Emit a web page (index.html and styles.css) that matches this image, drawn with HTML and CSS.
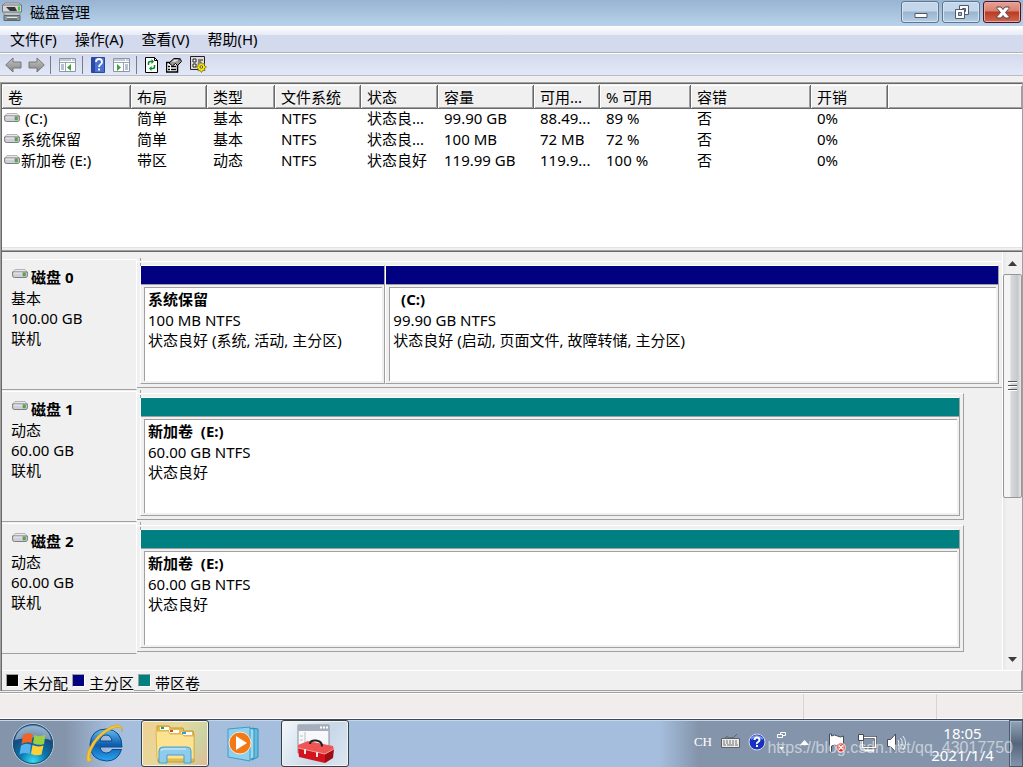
FILE: index.html
```html
<!DOCTYPE html>
<html lang="zh-CN">
<head>
<meta charset="utf-8">
<title>磁盘管理</title>
<link rel="stylesheet" href="styles.css">
</head>
<body>
<svg class="defs" aria-hidden="true">
  <defs>
    <linearGradient id="arrow" x1="0" y1="0" x2="0" y2="1"><stop offset="0" stop-color="#c4c4c4"/><stop offset="1" stop-color="#858585"/></linearGradient>
    <symbol id="drive" viewBox="0 0 16 9">
      <path d="M3 .5h10l2.3 2.700H.7z" fill="#e9e9ec" stroke="#a5a5a8" stroke-width=".8"/>
      <path d="M.6 3h14.800v4q-.5 1.500-1.400 1.500H2.200Q.6 8 .6 7z" fill="#cfcfd6" stroke="#737379" stroke-width=".9"/>
      <path d="M1.500 4h9" stroke="#f2f2f6"/>
      <path d="M11 4h2.500v3H11z" fill="#35c51b" stroke="#66806a" stroke-width=".5"/>
    </symbol>
  </defs>
</svg>
<div class="window">
  <header class="titlebar">
    <svg class="app-icon" width="20" height="22" viewBox="0 0 20 22">
      <path d="M3 2h14l3 3H0z" fill="#dedede" stroke="#858585"/>
      <path d="M.500 4h19v7H.500z" fill="#d5d5d6" stroke="#727678"/><path d="M4 6h9l2 4H8z" fill="#303638"/><path d="M16 5.500h2v4h-2z" fill="#2dcd34"/>
      <path d="M2 12h16v2H2z" fill="#f3f3f3" stroke="#8c9295"/><path d="M2 14.500h16v5H2z" fill="#8f989c" stroke="#5d666a"/><path d="M5 16.500h10" stroke="#e2e6e8"/><path d="M5 18h10" stroke="#4d575b"/>
    </svg>
    <h1>磁盘管理</h1>
    <div class="caption-buttons">
      <button class="caption" aria-label="最小化"><svg width="37" height="21" viewBox="0 0 37 21"><path d="M13 11.500h12v4H13z" fill="#fff" stroke="#50586a"/></svg></button>
      <button class="caption" aria-label="还原"><svg width="37" height="21" viewBox="0 0 37 21"><path d="M16.500 3.500h9v9h-9z" fill="#f7f9fb" stroke="#50586a"/><path d="M19.500 6.500h3v3h-3z" fill="#9fb8d1" stroke="#50586a"/><path d="M12.500 7.500h9v9h-9z" fill="#fff" stroke="#50586a"/><path d="M15.500 10.500h3v3h-3z" fill="#9fb8d1" stroke="#50586a"/></svg></button>
      <button class="caption close" aria-label="关闭"><svg width="37" height="21" viewBox="0 0 37 21"><path d="M13 5h4l2 2.500L21 5h4v1.500L21.500 10.500l3.500 4V16h-4l-2-2.500L17 16h-4v-1.500l3.500-4L13 6.500z" fill="#fff" stroke="#54454d"/></svg></button>
    </div>
  </header>
  <nav class="menubar">
    <button>文件(F)</button><button>操作(A)</button><button>查看(V)</button><button>帮助(H)</button>
  </nav>
  <div class="toolbar">
    <button aria-label="后退"><svg width="17" height="16" viewBox="0 0 17 16"><path d="M.700 8 8 1v4h8v6H8v4z" fill="url(#arrow)" stroke="#777"/></svg></button>
    <button class="forward" aria-label="前进"><svg width="17" height="16" viewBox="0 0 17 16"><path d="M16.300 8 9 1v4H1v6h8v4z" fill="url(#arrow)" stroke="#777"/></svg></button>
    <span class="sep"></span>
    <button aria-label="显示/隐藏控制台树"><svg width="17" height="16" viewBox="0 0 17 16"><path d="M.500 1.500h16v13H.500z" fill="#fff" stroke="#8c96a4"/><path d="M1 3h11" stroke="#8c96a4"/><path d="M13 3h3M1 5.500h15M6.500 6v8" stroke="#9ba5b2"/><path d="M2 8h3M2 10h3M2 12h3" stroke="#6f83a0"/><path d="M12 7v7l-4-3.500z" fill="#3aa535"/></svg></button>
    <span class="sep"></span>
    <button aria-label="帮助"><svg width="14" height="16" viewBox="0 0 14 16"><path d="M.500.500h13v15H.500z" fill="#4a70d0" stroke="#2a479f"/><path d="M1 1h3v14H1z" fill="#2b4aa6"/><path d="M5 5q0-3 3-3t3 3q0 1.500-1.500 2.500T8 10" fill="none" stroke="#fff" stroke-width="1.800"/><path d="M7 11.500h2v2H7z" fill="#fff"/></svg></button>
    <button class="next" aria-label="显示/隐藏操作窗格"><svg width="17" height="16" viewBox="0 0 17 16"><path d="M.500 1.500h16v13H.500z" fill="#fff" stroke="#8c96a4"/><path d="M1 3h11" stroke="#8c96a4"/><path d="M13 3h3M1 5.500h15M10.500 6v8" stroke="#9ba5b2"/><path d="M12 8h3M12 10h3M12 12h3" stroke="#6f83a0"/><path d="M4 7v7l4-3.500z" fill="#3aa535"/></svg></button>
    <span class="sep"></span>
    <button class="refresh" aria-label="刷新"><svg width="13" height="16" viewBox="0 0 13 16"><path d="M.500.500h9l3 3v12H.500z" fill="#fff" stroke="#000"/><path d="M9.500.500v3h3" fill="none" stroke="#000"/><path d="M3.500 8V6q0-1.500 2-1.500h2M9.500 8v2q0 1.500-2 1.500h-2" fill="none" stroke="#0b8a2a" stroke-width="1.500"/><path d="M6.500 2v5L9 4.500zM6.500 9v5L4 11.500z" fill="#0b8a2a"/></svg></button>
    <button class="next" aria-label="属性"><svg width="16" height="16" viewBox="0 0 16 16"><path d="M.500 5.500h11v9.500H.500z" fill="#fff" stroke="#000" stroke-width="1.500"/><path d="M2 9.500h2M5 9.500h5M2 12.500h2M5 12.500h5" stroke="#000" stroke-width="1.500"/><path d="M3 6 8 1.500h6l1.500 3-4 4-2-2-3 2.500z" fill="#999" stroke="#000"/><path d="m6 5 2-2h5l-4 2z" fill="#ddd"/><path d="M12.500 1v3l3-2" fill="#444"/></svg></button>
    <button aria-label="设置"><svg width="17" height="17" viewBox="0 0 17 17"><path d="M.500.500h14v13H.500z" fill="#dcdcdc" stroke="#222"/><path d="M3 3h3v3H3zM3 8h3v3H3z" fill="#fff" stroke="#222"/><path d="M8 4h5M8 6h3" stroke="#222"/><path d="m11 6 1.200 2 2.300-.5v2.300l2 1.200-2 1.500.5 2.200-2.300-.2-1.200 2-1.300-2-2.300.3.300-2.300-2-1.500 2-1.200L8 7.500l2 .500z" fill="#f5e414" stroke="#6c6000" stroke-width=".7"/><circle cx="11.300" cy="11" r="1.300" fill="#fff" stroke="#5e5400"/></svg></button>
  </div>
  <main class="console">
    <section class="volume-list">
      <table>
        <colgroup><col class="c-name"><col class="c-layout"><col class="c-type"><col class="c-fs"><col class="c-state"><col class="c-size"><col class="c-free"><col class="c-pct"><col class="c-fault"><col class="c-state"><col></colgroup>
        <thead><tr><th>卷</th><th>布局</th><th>类型</th><th>文件系统</th><th>状态</th><th>容量</th><th>可用...</th><th>% 可用</th><th>容错</th><th>开销</th><th></th></tr></thead>
        <tbody>
          <tr><td class="name"><svg class="drive"><use href="#drive"/></svg> (C:)</td><td>简单</td><td>基本</td><td>NTFS</td><td>状态良...</td><td>99.90 GB</td><td>88.49...</td><td>89 %</td><td>否</td><td>0%</td><td></td></tr>
          <tr><td class="name"><svg class="drive"><use href="#drive"/></svg>系统保留</td><td>简单</td><td>基本</td><td>NTFS</td><td>状态良...</td><td>100 MB</td><td>72 MB</td><td>72 %</td><td>否</td><td>0%</td><td></td></tr>
          <tr><td class="name"><svg class="drive"><use href="#drive"/></svg>新加卷 (E:)</td><td>带区</td><td>动态</td><td>NTFS</td><td>状态良好</td><td>119.99 GB</td><td>119.9...</td><td>100 %</td><td>否</td><td>0%</td><td></td></tr>
        </tbody>
      </table>
    </section>
    <div class="splitter"></div>
    <section class="graph">
      <div class="disks">
        <article class="disk">
          <div class="disk-info"><h2><svg class="drive"><use href="#drive"/></svg>磁盘 0</h2><p>基本</p><p>100.00 GB</p><p>联机</p></div>
          <div class="lane full">
            <div class="volume primary" style="flex-grow:243"><div class="bar"></div><div class="detail"><h3>系统保留</h3><p>100 MB NTFS</p><p>状态良好 (系统, 活动, 主分区)</p></div></div>
            <div class="volume primary" style="flex-grow:614"><div class="bar"></div><div class="detail"><h3>  (C:)</h3><p>99.90 GB NTFS</p><p>状态良好 (启动, 页面文件, 故障转储, 主分区)</p></div></div>
          </div>
        </article>
        <article class="disk">
          <div class="disk-info"><h2><svg class="drive"><use href="#drive"/></svg>磁盘 1</h2><p>动态</p><p>60.00 GB</p><p>联机</p></div>
          <div class="lane" style="width:95.6%">
            <div class="volume striped"><div class="bar"></div><div class="detail"><h3>新加卷  (E:)</h3><p>60.00 GB NTFS</p><p>状态良好</p></div></div>
          </div>
        </article>
        <article class="disk">
          <div class="disk-info"><h2><svg class="drive"><use href="#drive"/></svg>磁盘 2</h2><p>动态</p><p>60.00 GB</p><p>联机</p></div>
          <div class="lane" style="width:95.6%">
            <div class="volume striped"><div class="bar"></div><div class="detail"><h3>新加卷  (E:)</h3><p>60.00 GB NTFS</p><p>状态良好</p></div></div>
          </div>
        </article>
      </div>
      <div class="scrollbar">
        <button aria-label="向上滚动"><svg width="9" height="5" viewBox="0 0 9 5"><path d="M0 5 4.500 0 9 5z" fill="#3c3c3c"/></svg></button>
        <div class="track"><div class="thumb"><i></i><i></i><i></i></div></div>
        <button aria-label="向下滚动"><svg width="9" height="5" viewBox="0 0 9 5"><path d="M0 0h9L4.500 5z" fill="#3c3c3c"/></svg></button>
      </div>
    </section>
    <div class="legend">
      <i class="swatch"></i><span>未分配</span><i class="swatch navy"></i><span>主分区</span><i class="swatch teal"></i><span>带区卷</span>
    </div>
  </main>
  <div class="statusbar"><span></span><span></span><span></span></div>
</div>
<footer class="taskbar">
  <button class="start" aria-label="开始">
    <svg width="44" height="44" viewBox="0 0 44 44">
      <defs><radialGradient id="orb" cx=".5" cy=".92" r=".85"><stop offset="0" stop-color="#38dcf5"/><stop offset=".38" stop-color="#0a76ae"/><stop offset=".75" stop-color="#164b7c"/><stop offset="1" stop-color="#5c86ad"/></radialGradient></defs>
      <circle cx="22" cy="22" r="20.500" fill="url(#orb)" stroke="#b5cbdc"/><circle cx="22" cy="22" r="19.500" fill="none" stroke="#204b71"/>
      <path d="M4 18Q7 4 22 4t18 14q-18-5-36 0z" fill="#d4e2ef" opacity=".5"/>
      <path d="M12 13q5-3 10-.5L20.500 21q-5-2-10 1z" fill="#f26425"/><path d="M23.500 13q5 2.500 11-.5L33 22q-5 2-11-.7z" fill="#9bd045"/><path d="M10 23.500q5-3 10-.5l-1.500 9q-5-2-10 .5z" fill="#55b4ee"/><path d="M21.500 23q5 2.500 11 .5l-2 9q-5 2-10.500-.8z" fill="#ffcf37"/>
    </svg>
  </button>
  <button class="ie" aria-label="Internet Explorer">
    <svg width="42" height="42" viewBox="0 0 42 42">
      <defs><linearGradient id="eblue" x1="0" y1="0" x2="0" y2="1"><stop offset="0" stop-color="#64bef0"/><stop offset=".5" stop-color="#0d5cae"/><stop offset="1" stop-color="#2ba6f0"/></linearGradient></defs>
      <path fill-rule="evenodd" d="M38 24H16q1 6 6.500 6 4 0 5.500-3.500h9.500Q34 38 22.500 38 6 37 6 21.500 7 6 22.500 6 38 7 38 24zM16 18h12q-1-6-6-6t-6 6z" fill="url(#eblue)" stroke="#0a4a8d"/>
      <path d="M8 37Q0 43 4 28 11 11 28 3q12-4 10 6 1-7-8-4Q15 11 8 26q-5 12 1 10z" fill="#f7c733" stroke="#d59c16" stroke-width=".6"/>
    </svg>
  </button>
  <button class="task explorer" aria-label="Windows 资源管理器">
    <svg width="44" height="42" viewBox="0 0 44 42">
      <path d="M4 7V3h12l2 2h12l1 3h9l1 4v27H5z" fill="#e5bc50" stroke="#c59a38"/><path d="M7 4h9v3H7z" fill="#fff"/><path d="M8 4h3v2H8z" fill="#29a245"/><path d="M16 7h10v3H16z" fill="#fff"/><path d="M17 7h3v2h-3z" fill="#e03f2a"/><path d="M28 9h11v3H28z" fill="#fff"/><path d="M29 9h4v2h-4z" fill="#2b9bd8"/>
      <path d="M3 8h12l2 3h12l2 2h10v23H4z" fill="#fbe392" stroke="#dfb552"/>
      <path d="M6 40V28q0-4 4-4h24q4 0 4 4v12h-7v-8H14v8z" fill="#8ecced" stroke="#4d9ec9"/><path d="M8 28q0-2 3-2h22" fill="none" stroke="#d7f2ff"/>
    </svg>
  </button>
  <button class="media" aria-label="Windows Media Player">
    <svg width="34" height="36" viewBox="0 0 34 36">
      <path d="m25 2 6 1v28l-6 3z" fill="#64bce0" stroke="#318db8"/><path d="m21 2 6 1v29l-6 2z" fill="#9bd9ef" stroke="#318db8"/><path d="m1 3 22-2v34L1 31z" fill="#8fd0ec" stroke="#3d9bc6"/>
      <circle cx="13" cy="17" r="11" fill="#f37916" stroke="#fff" stroke-width=".8"/><path d="m9 10 11 7-11 7z" fill="#fff"/>
    </svg>
  </button>
  <button class="task current" aria-label="磁盘管理">
    <svg width="40" height="42" viewBox="0 0 40 42">
      <path d="M3 2h31v28H3z" fill="#f7f8fa" stroke="#858c98"/><path d="M3 2h31v6H3z" fill="#a7aebb"/><path d="M25 4.500h2m1 0h2m1 0h2" stroke="#fff" stroke-width="2"/><path d="M10 9v12M5 13h3M5 17h3" stroke="#b9c0ca"/>
      <path d="m3 22 10-4 25 5 1 4-9 5-27-6z" fill="#ee5555"/>
      <path d="m3 25 27 6v9L4 34z" fill="#d3141c"/><path d="m30 31 9-5-1 9-8 5z" fill="#9e0d14"/><path d="m3 25 27 6 9-5" fill="none" stroke="#f99b96"/>
      <path d="M15 21q0-4 6-3.500 6 .5 6 6" fill="none" stroke="#222" stroke-width="2"/>
      <path d="M10 26v5M22 29v5" stroke="#e6e6e6" stroke-width="2"/>
    </svg>
  </button>
  <div class="tray">
    <span class="lang">CH</span>
    <svg width="20" height="20" viewBox="0 0 20 20"><path d="M4 5q2-3 4 0 5 1 8-4" fill="none" stroke="#59636e"/><path d="M.500 5.500h18v9H.500z" fill="#ececec" stroke="#5e6064"/><path d="M2 8h15M2 10h15" stroke="#6b6e73" stroke-dasharray="2 1"/><path d="M2 12h3m1 0h7m1 0h3" stroke="#6b6e73"/></svg>
    <svg class="help-ball" width="18" height="18" viewBox="0 0 18 18"><circle cx="9" cy="9" r="8" fill="#1730bf" stroke="#d5dcec"/><path d="M3 6q5-6 12 0" fill="none" stroke="#7793e6" stroke-width="2"/><path d="M6.500 7q0-2.500 2.500-2.500T11.500 7q0 1-1.500 2T9 11" fill="none" stroke="#fff" stroke-width="2"/><path d="M8 12h2v2H8z" fill="#fff"/></svg>
    <svg class="lang-tools" width="9" height="20" viewBox="0 0 9 20"><path d="M3.500 1.500h5v3h-5z" fill="none" stroke="#fff"/><path d="M.500 3.500h5v3h-5z" fill="#8495ab" stroke="#fff"/><path d="M2 16h5l-2.500 3z" fill="#fff"/></svg>
    <svg class="chevron" width="9" height="5" viewBox="0 0 9 5"><path d="M0 5 4.500 0 9 5z" fill="#fff"/></svg>
    <svg class="flag" width="18" height="20" viewBox="0 0 18 20"><path d="M1.500 1v18h2v-6q3-2 6 0t6-1V3q-3 2-6 0t-6 0V1z" fill="#fff" stroke="#454c56"/><circle cx="13" cy="14.500" r="4.500" fill="#d92c26" stroke="#fff" stroke-width=".7"/><path d="m11 12.500 4 4m0-4-4 4" stroke="#fff" stroke-width="1.500"/></svg>
    <svg class="net" width="20" height="20" viewBox="0 0 20 20"><path d="M5.500 4.500h13v10h-13z" fill="#8495ab" stroke="#3f4854" stroke-width="3"/><path d="M5.500 4.500h13v10h-13z" fill="none" stroke="#fff" stroke-width="1.500"/><path d="M8 17.500h9" stroke="#fff" stroke-width="2"/><path d="M1.500 1.500h5v6h-5z" fill="#fff" stroke="#454c56"/><path d="M4 8v9h4" fill="none" stroke="#fff"/></svg>
    <svg class="sound" width="20" height="20" viewBox="0 0 20 20"><path d="M1.500 6.500h3L9.500 1v18l-5-5.500h-3z" fill="#fff" stroke="#454c56"/><path d="M12 7q2 3 0 6M14.500 5q3.500 5 0 10M17 3q5 7 0 14" fill="none" stroke="#e8edf2"/></svg>
    <div class="clock"><time>18:05</time><time>2021/1/4</time></div>
    <button class="show-desktop" aria-label="显示桌面"></button>
  </div>
  <span class="watermark">https://blog.csdn.net/qq_43017750</span>
</footer>
</body>
</html>
```

FILE: styles.css
```css
* { box-sizing: border-box; }
body {
  margin: 0;
  min-height: 100vh;
  display: flex;
  flex-direction: column;
  background: #f0f0f0;
  color: #000;
  font: 15px/20px "Noto Sans", "Noto Sans CJK SC", sans-serif;
}
h1, h2, h3, p { margin: 0; font-size: inherit; }
h1 { font-weight: 400; }
button { margin: 0; padding: 0; border: 0; background: none; color: inherit; font: inherit; }
svg { display: block; flex: none; }
.defs { position: absolute; width: 0; height: 0; }
.drive { width: 16px; height: 9px; }

.window { flex: 1; display: flex; flex-direction: column; }

.titlebar {
  display: flex;
  height: 26px;
  padding: 1px 2px;
  gap: 8px;
  background: linear-gradient(#98b4d2, #b9d2eb);
}
.titlebar h1 { flex: 1; line-height: 23px; }
.caption-buttons { display: flex; gap: 3px; }
.caption {
  width: 38px;
  height: 22px;
  overflow: hidden;
  border: 1px solid #5e7790;
  border-radius: 3px;
  background: linear-gradient(#c3d6ea 0 45%, #9bb4ce 50%, #b5cde5);
  box-shadow: inset 0 0 0 1px #d5e3f1;
}
.close {
  border-color: #501420;
  background: linear-gradient(#e7a294, #d9806f 45%, #b93a21 50%, #cd6950);
  box-shadow: inset 0 0 0 1px #e9a89d;
}

.menubar {
  display: flex;
  gap: 18px;
  height: 28px;
  padding: 0 10px 2px;
  border-bottom: 1px solid #fff;
  box-shadow: inset 0 -1px #b1b1b4;
  background: linear-gradient(#fff, #e6eaf6 9px, #d4daed 9px);
}
.toolbar {
  display: flex;
  align-items: center;
  height: 22px;
  padding: 0 5px;
  border-bottom: 1px solid #b6bccc;
  background: linear-gradient(#d4daed, #e3e8f7);
}
.forward { margin-left: 6px; }
.sep { width: 1px; height: 18px; margin: 0 8px 0 6px; background: #777d88; }
.forward + .sep { margin-left: 5px; }
.next, .next + button { margin-left: 8px; }

.console {
  flex: 1;
  display: flex;
  flex-direction: column;
  margin-top: 6px;
  border: 1px solid #a0a0a0;
  border-width: 1px 1px 0;
  box-shadow: inset 1px 1px #696969;
  padding: 2px 0 0 1px;
}
.volume-list { height: 160px; background: #fff; }
table { width: 100%; border-collapse: separate; border-spacing: 0; table-layout: fixed; }
th, td { padding: 0 0 0 6px; text-align: left; font-weight: 400; white-space: nowrap; overflow: hidden; }
th {
  height: 24px;
  background: #f0f0f0;
  border-right: 1px solid #696969;
  border-bottom: 1px solid #696969;
  box-shadow: inset 1px 1px #fff, inset -1px -1px #a0a0a0;
}
th:last-child { border-right: 0; }
td { height: 21px; padding-bottom: 2px; line-height: 19px; }
.name { padding-left: 2px; white-space: pre; }
.name .drive { display: inline-block; margin-right: 1px; vertical-align: 2px; }
.c-name { width: 129px; }
.c-layout { width: 76px; }
.c-type { width: 68px; }
.c-fs { width: 86px; }
.c-state { width: 77px; }
.c-size { width: 96px; }
.c-free { width: 66px; }
.c-pct { width: 91px; }
.c-fault { width: 120px; }

.splitter { height: 7px; border-top: 2px solid #fff; border-bottom: 1px solid #696969; box-shadow: inset 0 -1px #a0a0a0, inset 0 1px #e3e3e3; }

.graph { flex: 1; display: flex; }
.disks { flex: 1; padding-top: 7px; }
.disk { display: grid; grid-template-columns: 135px 1fr; height: 131px; margin-bottom: 1px; }
.disk-info {
  padding: 7px 9px 0;
  border-top: 1px solid #fff;
  border-right: 1px solid #fff;
  border-bottom: 1px solid #a0a0a0;
}
.disk-info h2 { display: flex; gap: 3px; padding-left: 1px; }
.disk-info h2 .drive { margin-top: 2px; }
.disk-info p:nth-of-type(1), .detail p:nth-of-type(1) { margin-top: 1px; }
.lane {
  position: relative;
  display: flex;
  height: 127px;
  margin-top: 2px;
  padding: 3px;
  border: 1px solid #a0a0a0;
  border-top-color: #fff;
  border-left: 0;
}
.lane::before { content: ""; position: absolute; left: 3px; top: -4px; height: 8px; border-left: 1px dashed #a0a0a0; }
.full { border-right: 0; }
.volume {
  flex: 1 1 0;
  min-width: 0;
  display: flex;
  flex-direction: column;
  padding: 0 2px 2px 0;
  border: 1px solid #fff;
  border-right-color: #a0a0a0;
  border-bottom-color: #a0a0a0;
}
.bar { height: 19px; margin-right: -2px; border-bottom: 1px solid #a0a0a0; }
.primary .bar { background: #000080; }
.striped .bar { background: #008080; }
.detail {
  flex: 1;
  margin: 2px 0 0 3px;
  padding: 1px 3px;
  border-top: 1px solid #a0a0a0;
  border-left: 1px solid #a0a0a0;
  background: #fff;
  white-space: pre;
  overflow: hidden;
}

.scrollbar {
  display: flex;
  flex-direction: column;
  width: 20px;
  border-left: 1px solid #fff;
  background: linear-gradient(90deg, #e7e7e7, #f0f0f0 4px);
}
.scrollbar button { display: grid; place-items: center; height: 22px; }
.track { flex: 1; }
.thumb {
  display: flex;
  flex-direction: column;
  align-items: center;
  justify-content: center;
  gap: 2px;
  height: 60%;
  border: 1px solid #979797;
  border-radius: 2px;
  background: linear-gradient(90deg, #f5f5f5 0 35%, #d9dadc 40%, #c7c8cb 80%, #e8e8ea);
}
.thumb i { width: 9px; height: 2px; border-top: 1px solid #555; border-bottom: 1px solid #fff; }

.legend {
  display: flex;
  height: 21px;
  padding-left: 4px;
  border: 1px solid #a0a0a0;
  border-width: 1px 1px 1px 0;
  border-top-color: #fff;
}
.swatch { width: 13px; height: 13px; margin-top: 3px; border: 1px solid #a0a0a0; border-right-color: #fff; border-bottom-color: #fff; background: #000; }
.navy { background: #000080; }
.teal { background: #008080; }
.legend span { height: 20px; margin: 0 4px; line-height: 24px; background: #f0f0f0; }

.statusbar {
  display: grid;
  grid-template-columns: 1fr 133px 86px;
  height: 27px;
  margin-top: 1px;
  padding-top: 1px;
  border-top: 1px solid #a0a0a0;
  background: #f1edec;
  box-shadow: inset 0 1px #fff, inset 0 -1px #fff;
}
.statusbar span { border-right: 1px solid #d7d4d4; }

.taskbar {
  position: relative;
  display: flex;
  height: 48px;
  border-top: 1px solid #3d4a5a;
  box-shadow: inset 0 1px #c4d7ea;
  background: linear-gradient(90deg, #8495ab 66px, #a5bedd 110px, #a5bedd calc(100% - 363px), #8495ab calc(100% - 325px));
}
.start { margin-left: 11px; }
.ie { margin: 0 15px 0 29px; }
.task {
  display: grid;
  place-items: center;
  width: 68px;
  border: 1px solid #34414f;
  border-radius: 3px;
  box-shadow: inset 0 0 0 1px #f5f4e7;
}
.explorer { background: linear-gradient(120deg, #f0cf91, #e5d99b 45%, #ccd3a3 75%, #e4b991); }
.media { margin: 0 20px 0 18px; }
.current { background: linear-gradient(120deg, #f3f7fb, #c8d8e9 60%, #dce7f2); }
.tray { display: flex; align-items: center; margin-left: auto; color: #fff; }
.lang { margin: -4px 9px 0 0; font-family: "Liberation Serif", serif; font-size: 13px; }
.tray svg { margin-bottom: 2px; }
.tray .help-ball { margin: 0 11px 4px 7px; }
.tray .lang-tools { margin: 0 14px 5px 0; }
.chevron { margin-right: 19px; }
.flag { margin-right: 11px; }
.net { margin-right: 9px; }
.clock { width: 83px; margin: 0 5px 0 15px; text-align: center; line-height: 22px; }
.clock time { display: block; }
.show-desktop {
  align-self: stretch;
  width: 14px;
  border: 1px solid #4b5a6c;
  background: linear-gradient(#93a3b7, #56677d 50%, #8193a9);
  box-shadow: inset 1px 1px #a9b8ca;
}
.watermark {
  position: absolute;
  right: 10px;
  bottom: 8px;
  color: rgba(255, 255, 255, .55);
  font: 16px/22px "Liberation Sans", Arial, sans-serif;
}
```
